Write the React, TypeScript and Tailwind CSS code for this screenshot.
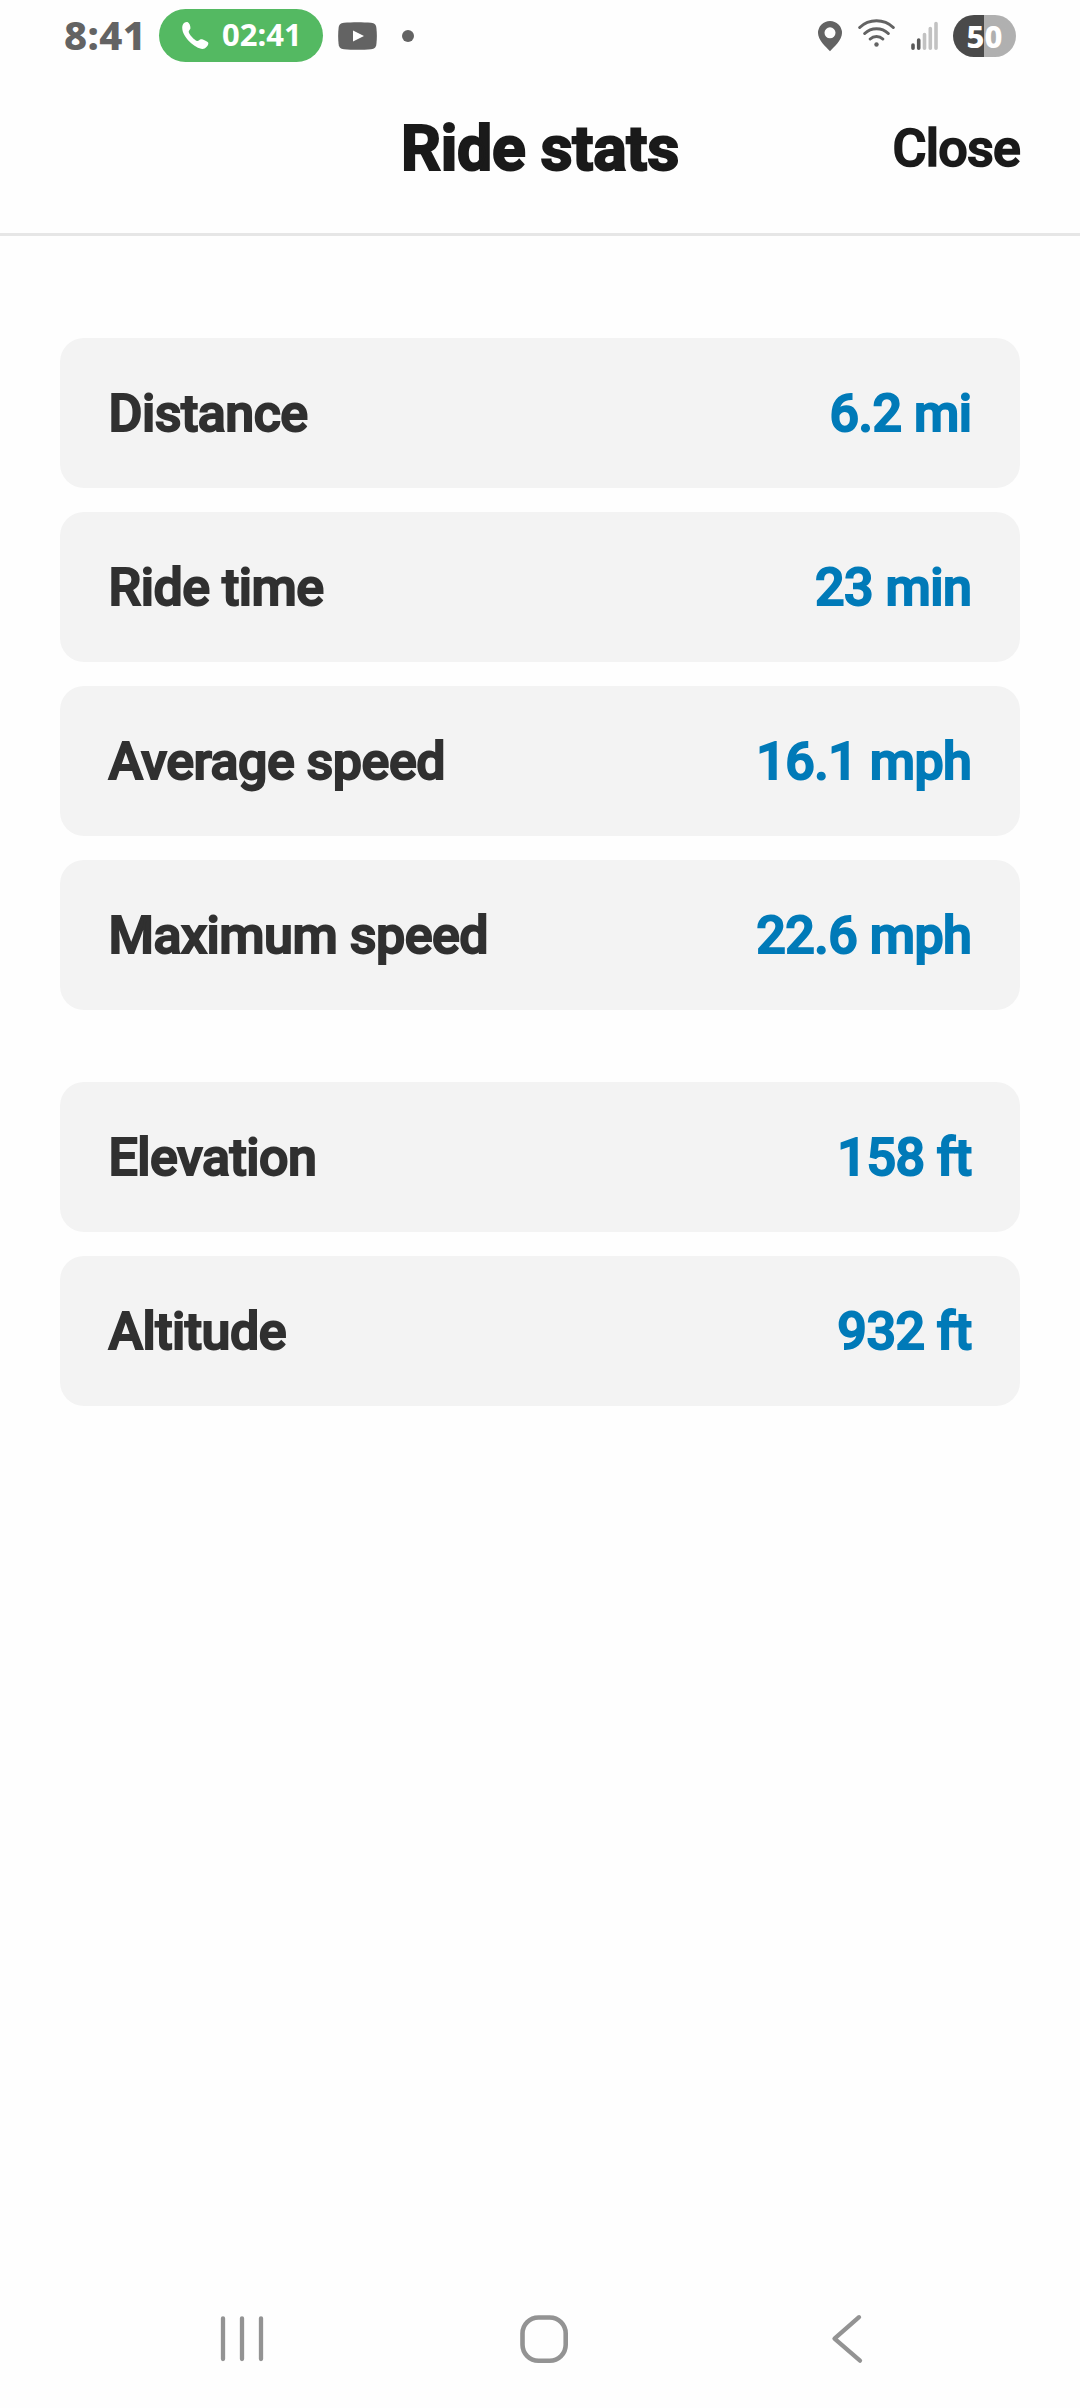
import * as React from "react"

type Stat = { label: string; value: string }

const rideStats: Stat[] = [
  { label: "Distance", value: "6.2 mi" },
  { label: "Ride time", value: "23 min" },
  { label: "Average speed", value: "16.1 mph" },
  { label: "Maximum speed", value: "22.6 mph" },
]

const terrainStats: Stat[] = [
  { label: "Elevation", value: "158 ft" },
  { label: "Altitude", value: "932 ft" },
]

function StatusBar() {
  return (
    <div className="flex h-[72px] items-start justify-between pr-16 pl-16 font-['Noto_Sans',sans-serif] font-bold text-[#636363]">
      <div className="flex items-center pt-[9px]">
        <span className="w-[95px] pb-px text-[40px] leading-[52px] font-extrabold tracking-[0.01em]">8:41</span>
        <div className="flex h-[53px] w-[164px] items-center rounded-full bg-[#54b962] pl-[22px] text-white">
          <svg width="29" height="29" viewBox="0 0 29 29" fill="currentColor">
            <path d="M1.600 4.200C2.600 1.900 5 .5 6.900 1.300c1.600.7 2.800 4.600 2.500 6.200-.2 1.300-1.900 2.100-1.700 3.500.3 2.300 5.800 8.300 8.300 9 1.500.4 2.500-1.700 4-1.800 1.800-.1 6.200 1.900 7.100 3.400 1 1.800-1.400 4.900-3.500 5.900C16.500 30.500-1.600 15 1.600 4.200Z" />
          </svg>
          <span className="ml-3 pb-0.5 text-[31px] leading-none">02:41</span>
        </div>
        <svg className="ml-[15px]" width="39" height="28" viewBox="0 0 39 28">
          <path d="M6 .8C14 0 25 0 33 .8c3.700.4 5 2 5.400 5.200.6 5 .6 11 0 16-.4 3.200-1.700 4.800-5.400 5.200-8 .8-19 .8-27 0C2.300 26.800 1 25.200.6 22 0 17 0 11 .6 6 1 2.800 2.300 1.200 6 .8Z" fill="currentColor" />
          <path d="M15 8.500v11L26 14Z" fill="white" />
        </svg>
        <span className="ml-[25px] size-3 rounded-full bg-current" />
      </div>

      <div className="flex items-center pt-[15px]">
        <svg width="24" height="42" viewBox="0 0 24 42">
          <path d="M12 6a12 12 0 0 1 12 12c0 7-8 14-12 18.300C8 32 0 25 0 18A12 12 0 0 1 12 6Zm0 6.300a5.500 5.500 0 1 0 0 11 5.500 5.500 0 0 0 0-11Z" fill="currentColor" />
        </svg>
        <svg className="ml-4" width="37" height="42" viewBox="0 0 37 42" fill="none" stroke="currentColor" strokeWidth="3" strokeLinecap="round">
          <path d="M1.700 12.500C11 3.500 26 3.500 35.300 12.500M6.700 18.500c6.500-6.300 17.100-6.300 23.600 0M12.200 24c3.500-3.500 9.100-3.500 12.600 0" />
          <circle cx="18.500" cy="29.500" r="2.200" fill="currentColor" stroke="none" />
        </svg>
        <svg className="ml-4" width="27" height="42" viewBox="0 0 27 42" strokeWidth="3.600" strokeLinecap="round">
          <path d="M2 30v3.200M7.700 25v8.200" stroke="#595959" />
          <path d="M13.500 19.500v13.700M19.300 13.500v19.700M25 8.500v24.700" stroke="#c2c2c2" />
        </svg>
        <div className="ml-[15px] flex h-[42px] w-[63px] items-center justify-center rounded-full bg-linear-to-r from-[#4a4a4a] from-50% to-[#b0b0b0] to-50% text-[31px] leading-none font-extrabold text-white">
          50
        </div>
      </div>
    </div>
  )
}

function Header() {
  return (
    <header className="grid h-[164px] grid-cols-3 border-b-[3px] border-[#e6e6e6] px-[60px] pb-2 text-[#1a1a1a]">
      <h1 className="col-start-2 self-center justify-self-center pt-0.5 text-[62.5px] leading-none font-bold tracking-[-0.005em] whitespace-nowrap [-webkit-text-stroke:2px]">
        Ride stats
      </h1>
      <button className="self-center justify-self-end text-[52px] leading-none font-medium tracking-[-0.015em] [-webkit-text-stroke:1.7px]">
        Close
      </button>
    </header>
  )
}

function StatGroup({ stats }: { stats: Stat[] }) {
  return (
    <dl className="flex flex-col gap-6">
      {stats.map((stat) => (
        <div key={stat.label} className="flex h-[150px] items-center justify-between rounded-3xl bg-[#f3f3f3] px-[48.5px] pt-px text-[52px] leading-none font-medium tracking-[-0.01em] [-webkit-text-stroke:1.9px]">
          <dt className="text-[#303030]">{stat.label}</dt>
          <dd className="text-[#007ab8]">{stat.value}</dd>
        </div>
      ))}
    </dl>
  )
}

function NavBar() {
  return (
    <nav className="mt-auto flex h-[138px] items-center pl-[219px] text-[#939393]">
      <svg width="46" height="50" viewBox="0 0 46 50" stroke="currentColor" strokeWidth="4.300" strokeLinecap="round">
        <path d="M4 4.300v40.800M23 4.300v40.800M42 4.300v40.800" />
      </svg>
      <svg className="ml-[254px]" width="50" height="50" viewBox="0 0 50 50" fill="none" stroke="currentColor" strokeWidth="4.600">
        <rect x="3.500" y="3.500" width="43.200" height="43.200" rx="16" />
      </svg>
      <svg className="ml-[262px]" width="34" height="50" viewBox="0 0 34 50" fill="none" stroke="currentColor" strokeWidth="4.300" strokeLinecap="round" strokeLinejoin="round">
        <path d="M28 3.200 3.500 24.700 29 46.700" />
      </svg>
    </nav>
  )
}

export default function App() {
  return (
    <div className="flex h-[2408px] w-[1080px] flex-col bg-[#fefefe] font-[Roboto,sans-serif]">
      <StatusBar />
      <Header />
      <main className="flex flex-col gap-[72px] px-[60px] pt-[102px]">
        <StatGroup stats={rideStats} />
        <StatGroup stats={terrainStats} />
      </main>
      <NavBar />
    </div>
  )
}
